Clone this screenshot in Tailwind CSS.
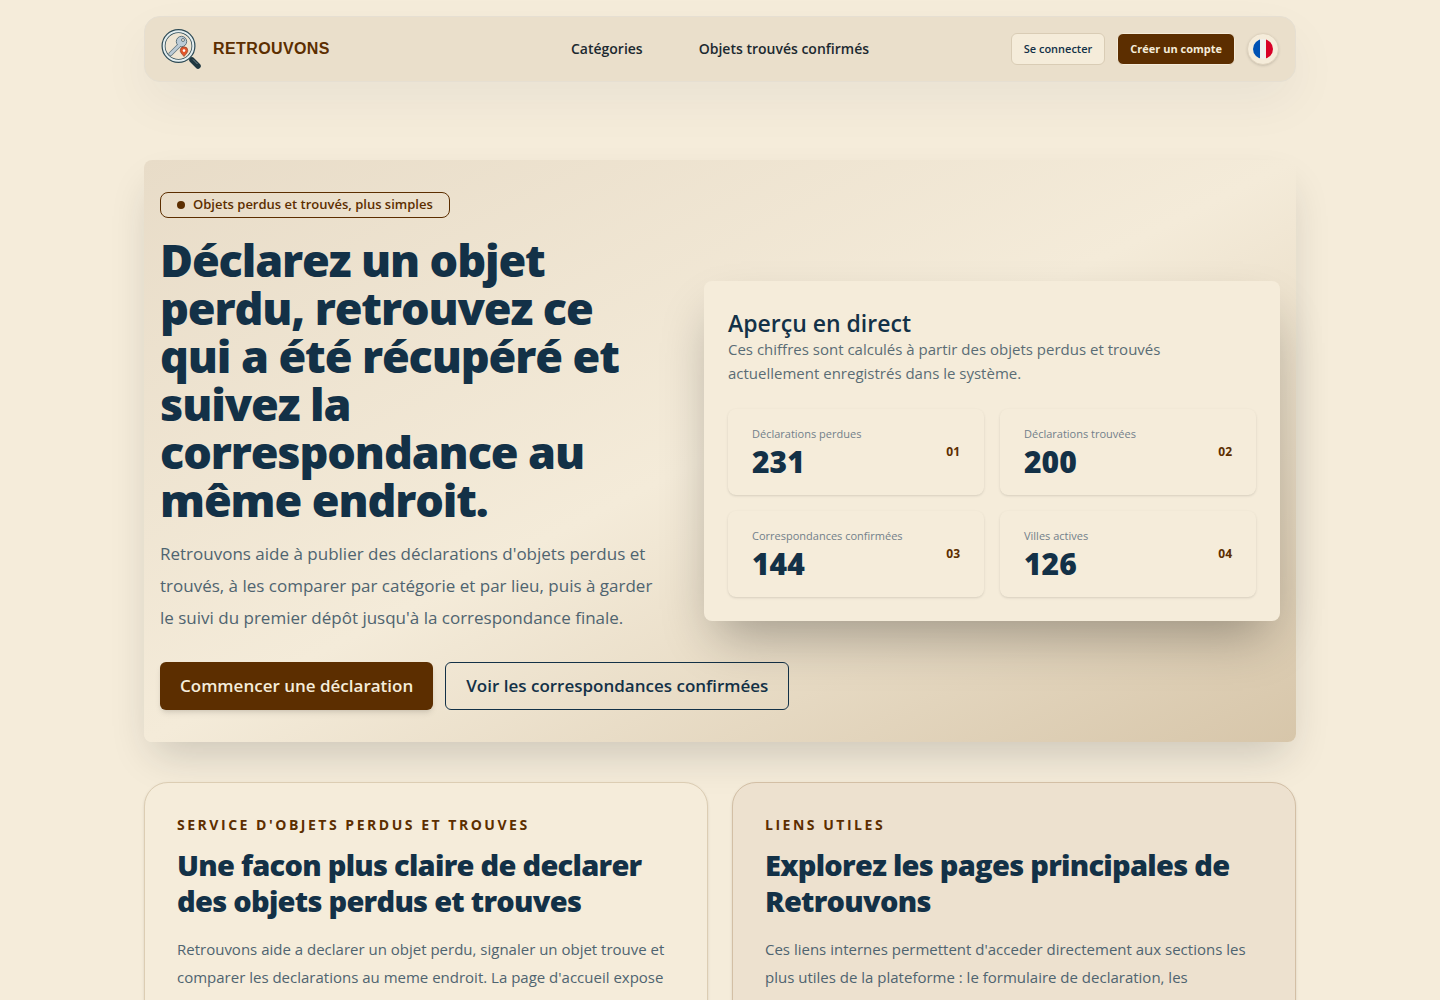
<!DOCTYPE html>
<html lang="fr">
<head>
<meta charset="utf-8">
<meta name="viewport" content="width=device-width, initial-scale=1">
<title>Retrouvons</title>
<script src="https://cdn.jsdelivr.net/npm/@tailwindcss/browser@4"></script>
</head>
<body class="min-h-screen overflow-x-hidden bg-[#f5ecda] font-['Open_Sans','Noto_Sans',sans-serif] text-[#133147]">
<div class="mx-auto max-w-6xl pb-10">
  <header class="mt-4 flex h-[66px] items-center justify-between rounded-2xl border border-[#e6dfd2] bg-[#eadfcb] px-4 shadow-[0_20px_50px_rgba(19,49,71,0.05)]">
    <a href="#" class="flex flex-1 items-center gap-3">
      <svg class="size-10" viewBox="0 0 40 40" fill="none" aria-hidden="true">
        <path d="M28 28l3 3" stroke="#8a979b" stroke-width="3"/>
        <path d="M31 31l6 6" stroke="#1f3740" stroke-width="5.500" stroke-linecap="round"/>
        <path d="M32 30.500l4.500 4.500" stroke="#6b7e84" stroke-width="1"/>
        <circle cx="17.500" cy="17" r="15" fill="#efe5d3" stroke="#2d4a55" stroke-width="4"/>
        <circle cx="17.500" cy="17" r="14.800" stroke="#e4eef0" stroke-width="2"/>
        <path d="M19 15.500l-9.500 9.500" stroke="#60757f" stroke-width="4.200" stroke-linecap="round"/>
        <circle cx="20.500" cy="12.500" r="5.200" fill="#bccbd6" stroke="#60757f"/>
        <path d="M19 15.500l-9.500 9.500" stroke="#bccbd6" stroke-width="2.800" stroke-linecap="round"/>
        <circle cx="22" cy="11" r="1.500" fill="#f5ecda" stroke="#4a606b" stroke-width=".8"/>
        <path d="M23 27.500c-2.500-3-3.800-4.200-3.800-5.900a3.800 3.800 0 017.600 0c0 1.700-1.300 2.900-3.800 5.900z" fill="#e2562b" stroke="#7d3823" stroke-width=".6"/>
        <circle cx="23" cy="21.600" r="1.300" fill="#fff"/>
      </svg>
      <span class="font-['Liberation_Sans',sans-serif] text-base font-bold tracking-wide text-[#5c2e00]">RETROUVONS</span>
    </a>
    <nav class="flex items-center gap-14 text-sm font-semibold text-[#1c2930]">
      <a href="#">Catégories</a>
      <a href="#">Objets trouvés confirmés</a>
    </nav>
    <div class="flex flex-1 items-center justify-end gap-3">
      <button class="h-8 rounded-md border border-[#d9ccb5] bg-[#f5ecda] px-3 text-[11px] font-semibold">Se connecter</button>
      <button class="h-8 rounded-md border border-[#f5ecda] bg-[#5c2e00] px-3 text-[11px] font-bold text-[#f5ecda]">Créer un compte</button>
      <button aria-label="Français" class="grid size-8 place-items-center rounded-full border border-[#dfd3be] bg-[#f5ecda] shadow-sm">
        <svg class="size-5" viewBox="0 0 20 20" aria-hidden="true"><clipPath id="disc"><circle cx="10" cy="10" r="10"/></clipPath><g clip-path="url(#disc)"><path fill="#0052b4" d="M0 0h7v20H0z"/><path fill="#f0f0f0" d="M7 0h6v20H7z"/><path fill="#d80027" d="M13 0h7v20h-7z"/></g></svg>
      </button>
    </div>
  </header>

  <main>
    <section class="mt-[78px] grid grid-cols-[minmax(0,8fr)_minmax(0,9fr)] items-center gap-8 rounded-lg bg-linear-[to_bottom_right,#e8dcc8,#f4ebd9_50%,#d7c6aa] px-4 py-8 shadow-[0_20px_40px_-10px_rgba(30,35,40,0.2)]">
      <div>
        <p class="flex h-[26px] w-fit items-center gap-2 rounded-lg border border-[#5c2e00] px-4 text-[13px] font-semibold text-[#5c2e00]"><span class="size-2 rounded-full bg-[#5c2e00]"></span>Objets perdus et trouvés, plus simples</p>
        <h1 class="mt-[18px] text-[45px] leading-[48px] font-extrabold tracking-tight">Déclarez un objet perdu, retrouvez ce qui a été récupéré et suivez la correspondance au même endroit.</h1>
        <p class="mt-[14px] pr-4 text-[17px] leading-8 text-[#4f6470]">Retrouvons aide à publier des déclarations d'objets perdus et trouvés, à les comparer par catégorie et par lieu, puis à garder le suivi du premier dépôt jusqu'à la correspondance finale.</p>
        <div class="mt-7 flex gap-3">
          <button class="h-12 shrink-0 rounded-md bg-[#5c2e00] px-5 text-[17px] font-semibold whitespace-nowrap text-[#f5ecda] shadow-md">Commencer une déclaration</button>
          <button class="h-12 shrink-0 rounded-md border border-[#133147] px-5 text-[17px] font-semibold whitespace-nowrap">Voir les correspondances confirmées</button>
        </div>
      </div>
      <div class="rounded-lg bg-[#f5ecda] p-6 shadow-[0_25px_50px_-12px_rgba(0,0,0,0.32)]">
        <h2 class="pt-1 text-[23px] leading-7 font-semibold">Aperçu en direct</h2>
        <p class="pr-12 text-[15px] leading-6 text-[#5a6c75]">Ces chiffres sont calculés à partir des objets perdus et trouvés actuellement enregistrés dans le système.</p>
        <dl class="mt-6 grid grid-cols-2 gap-4">
          <div class="flex h-[86px] items-center justify-between rounded-lg px-6 shadow-sm">
            <div><dt class="text-[11px] leading-5 text-[#72808a]">Déclarations perdues</dt><dd class="text-[30px] leading-9 font-extrabold">231</dd></div>
            <span class="text-xs font-bold text-[#5c2e00]">01</span>
          </div>
          <div class="flex h-[86px] items-center justify-between rounded-lg px-6 shadow-sm">
            <div><dt class="text-[11px] leading-5 text-[#72808a]">Déclarations trouvées</dt><dd class="text-[30px] leading-9 font-extrabold">200</dd></div>
            <span class="text-xs font-bold text-[#5c2e00]">02</span>
          </div>
          <div class="flex h-[86px] items-center justify-between rounded-lg px-6 shadow-sm">
            <div><dt class="text-[11px] leading-5 text-[#72808a]">Correspondances confirmées</dt><dd class="text-[30px] leading-9 font-extrabold">144</dd></div>
            <span class="text-xs font-bold text-[#5c2e00]">03</span>
          </div>
          <div class="flex h-[86px] items-center justify-between rounded-lg px-6 shadow-sm">
            <div><dt class="text-[11px] leading-5 text-[#72808a]">Villes actives</dt><dd class="text-[30px] leading-9 font-extrabold">126</dd></div>
            <span class="text-xs font-bold text-[#5c2e00]">04</span>
          </div>
        </dl>
      </div>
    </section>

    <section class="mt-10 grid grid-cols-2 gap-6">
      <article class="rounded-3xl border border-[#dccdb3] bg-[#f5ecda] p-8 shadow-sm">
        <p class="text-sm leading-5 font-bold tracking-[0.18em] text-[#5c2e00] uppercase">Service d'objets perdus et trouves</p>
        <h2 class="mt-3 text-[29px] leading-9 font-extrabold tracking-tight">Une facon plus claire de declarer des objets perdus et trouves</h2>
        <p class="mt-4 text-[15px] leading-7 text-[#4f6470]">Retrouvons aide a declarer un objet perdu, signaler un objet trouve et comparer les declarations au meme endroit. La page d'accueil expose des informations textuelles visibles sur les objets perdus.</p>
      </article>
      <article class="rounded-3xl border border-[#d3bfa5] bg-[#ede1cf] p-8 shadow-sm">
        <p class="text-sm leading-5 font-bold tracking-[0.18em] text-[#5c2e00] uppercase">Liens utiles</p>
        <h2 class="mt-3 text-[29px] leading-9 font-extrabold tracking-tight">Explorez les pages principales de Retrouvons</h2>
        <p class="mt-4 text-[15px] leading-7 text-[#4f6470]">Ces liens internes permettent d'acceder directement aux sections les plus utiles de la plateforme : le formulaire de declaration, les categories, les objets trouves confirmes et les liens utiles.</p>
      </article>
    </section>
  </main>
</div>
</body>
</html>
